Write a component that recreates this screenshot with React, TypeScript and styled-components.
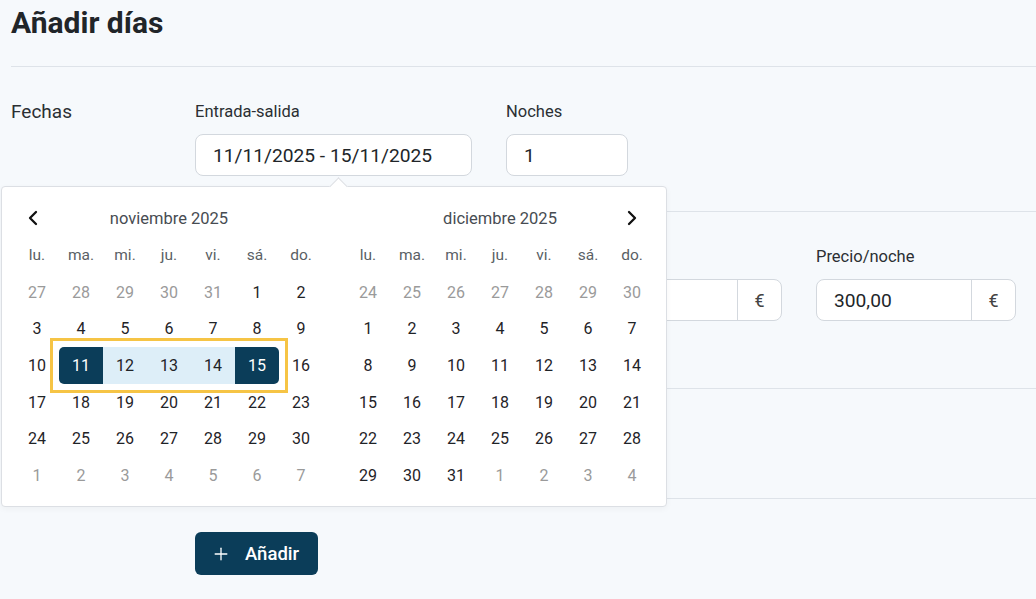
import React from 'react'
import styled, { createGlobalStyle } from 'styled-components'
import { Plus } from 'lucide-react'

const GlobalStyle = createGlobalStyle`
  * { box-sizing: border-box; }
  body {
    margin: 0;
    background: #f6f9fc;
    font-family: Roboto, "Liberation Sans", sans-serif;
    color: #212529;
  }
`

const Page = styled.div`
  position: relative;
  padding: 5px 0 0 11px;
  min-height: 599px;
`

const Header = styled.div`
  padding-bottom: 25px;
  border-bottom: 1px solid #dee3e9;
`

const Title = styled.h1`
  margin: 0;
  font-size: 30px;
  line-height: 36px;
  font-weight: 700;
  color: #212529;
`

const Section = styled.div<{ $top: number; $bottom: number }>`
  display: flex;
  padding: ${(p) => p.$top}px 0 ${(p) => p.$bottom}px;
  border-bottom: 1px solid #dee3e9;
`

const SectionLabel = styled.div`
  width: 184px;
  font-size: 19px;
  line-height: 20px;
  color: #2b2f33;
`

const Fields = styled.div`
  display: flex;
  gap: 34px;
`

const Field = styled.div<{ $width: number }>`
  width: ${(p) => p.$width}px;
  display: flex;
  flex-direction: column;
  gap: 12px;
`

const FieldLabel = styled.label`
  font-size: 16.5px;
  line-height: 20px;
  color: #2b2f33;
`

const InputBox = styled.div`
  display: flex;
  height: 42px;
  background: #fff;
  border: 1px solid #d3d8de;
  border-radius: 8px;
  overflow: hidden;
`

const InputText = styled.div`
  flex: 1;
  display: flex;
  align-items: center;
  padding-left: 17px;
  font-size: 19.2px;
  color: #212529;
`

const Addon = styled.div`
  width: 44px;
  display: flex;
  align-items: center;
  justify-content: center;
  border-left: 1px solid #d3d8de;
  font-size: 18px;
  color: #444;
`

const Actions = styled.div`
  padding: 33px 0 0 184px;
`

const Button = styled.button`
  display: flex;
  align-items: center;
  gap: 14px;
  height: 43px;
  padding: 0 19px 0 16px;
  border: none;
  border-radius: 6px;
  background: #0b3d59;
  color: #fff;
  font-family: inherit;
  font-size: 18.5px;
  font-weight: 500;
  cursor: pointer;
`

const Popup = styled.div`
  position: absolute;
  left: 1px;
  top: 186px;
  width: 666px;
  display: flex;
  gap: 23px;
  padding: 14px 12px 12px 13px;
  background: #fff;
  border: 1px solid #dcdfe4;
  border-radius: 4px;
  box-shadow: 0 2px 6px rgba(0, 0, 0, 0.04);

  &::before {
    content: '';
    position: absolute;
    left: 330px;
    top: -7px;
    width: 12px;
    height: 12px;
    background: #fff;
    border-top: 1px solid #dcdfe4;
    border-left: 1px solid #dcdfe4;
    transform: rotate(45deg);
  }
`

const Month = styled.div`
  width: 308px;
`

const MonthHeader = styled.div`
  display: grid;
  grid-template-columns: 44px 1fr 44px;
  align-items: center;
  height: 36px;
  margin-top: -1px;
  margin-bottom: 1px;
`

const MonthName = styled.div`
  text-align: center;
  font-size: 16.5px;
  color: #474c52;
`

const NavButton = styled.button<{ $side: 'left' | 'right' }>`
  display: flex;
  align-items: center;
  justify-content: center;
  padding: 0;
  margin-left: ${(p) => (p.$side === 'left' ? '-9px' : '0')};
  border: none;
  background: none;
  color: #111;
  cursor: pointer;
`

const Week = styled.div`
  display: flex;
  height: 36.7px;
`

const Cell = styled.div<{ $muted?: boolean; $head?: boolean; $state?: 'start' | 'end' | 'mid' }>`
  width: 44px;
  height: 100%;
  display: flex;
  align-items: center;
  justify-content: center;
  font-size: ${(p) => (p.$head ? 15.5 : 16)}px;
  color: ${(p) =>
    p.$state === 'start' || p.$state === 'end'
      ? '#fff'
      : p.$head
      ? '#5a5f65'
      : p.$muted
      ? '#9a9a9a'
      : '#1f2327'};
  background: ${(p) =>
    p.$state === 'start' || p.$state === 'end'
      ? '#0b3d59'
      : p.$state === 'mid'
      ? '#ddeef8'
      : 'transparent'};
  border-radius: ${(p) =>
    p.$state === 'start' ? '5px 0 0 5px' : p.$state === 'end' ? '0 5px 5px 0' : '0'};
`

const Range = styled.div`
  display: flex;
  outline: 3px solid #f6c445;
  outline-offset: 6px;
`

const Chevron = ({ dir }: { dir: 'left' | 'right' }) => (
  <svg width="12" height="16" viewBox="0 0 12 16" fill="none" stroke="currentColor" strokeWidth="2.3" strokeLinecap="round" strokeLinejoin="round">
    {dir === 'left' ? <path d="M9 2 L3 8 L9 14" /> : <path d="M3 2 L9 8 L3 14" />}
  </svg>
)

const weekdays = ['lu.', 'ma.', 'mi.', 'ju.', 'vi.', 'sá.', 'do.']

type Day = { d: number; muted: boolean; state?: 'start' | 'end' | 'mid' }

const buildMonth = (prevLast: number, prevStart: number, daysIn: number, selStart?: number, selEnd?: number) => {
  const days: Day[] = []
  for (let d = prevStart; d <= prevLast; d++) days.push({ d, muted: true })
  for (let d = 1; d <= daysIn; d++) {
    let state: Day['state']
    if (selStart && selEnd && d >= selStart && d <= selEnd) {
      state = d === selStart ? 'start' : d === selEnd ? 'end' : 'mid'
    }
    days.push({ d, muted: false, state })
  }
  let n = 1
  while (days.length < 42) days.push({ d: n++, muted: true })
  const weeks: Day[][] = []
  for (let i = 0; i < 42; i += 7) weeks.push(days.slice(i, i + 7))
  return weeks
}

const months = [
  { name: 'noviembre 2025', weeks: buildMonth(31, 27, 30, 11, 15), nav: 'prev' },
  { name: 'diciembre 2025', weeks: buildMonth(30, 24, 31), nav: 'next' },
]

const WeekRow = ({ week }: { week: Day[] }) => {
  const parts: React.ReactNode[] = []
  let group: Day[] = []
  const flush = (key: string) => {
    if (group.length) {
      parts.push(
        <Range key={key}>
          {group.map((g, i) => (
            <Cell key={i} $state={g.state}>
              {g.d}
            </Cell>
          ))}
        </Range>
      )
      group = []
    }
  }
  week.forEach((day, i) => {
    if (day.state) {
      group.push(day)
    } else {
      flush('r' + i)
      parts.push(
        <Cell key={i} $muted={day.muted}>
          {day.d}
        </Cell>
      )
    }
  })
  flush('end')
  return <Week>{parts}</Week>
}

const App = () => {
  return (
    <Page>
      <GlobalStyle />
      <Header>
        <Title>Añadir días</Title>
      </Header>

      <Section $top={35} $bottom={35}>
        <SectionLabel>Fechas</SectionLabel>
        <Fields>
          <Field $width={277}>
            <FieldLabel>Entrada-salida</FieldLabel>
            <InputBox>
              <InputText>11/11/2025 - 15/11/2025</InputText>
            </InputBox>
          </Field>
          <Field $width={122}>
            <FieldLabel>Noches</FieldLabel>
            <InputBox>
              <InputText>1</InputText>
            </InputBox>
          </Field>
        </Fields>
      </Section>

      <Section $top={35} $bottom={67}>
        <SectionLabel>Precio</SectionLabel>
        <Fields>
          <Field $width={277}>
            <FieldLabel>Tarifa</FieldLabel>
            <InputBox>
              <InputText>Estándar</InputText>
            </InputBox>
          </Field>
          <Field $width={276}>
            <FieldLabel>Precio total</FieldLabel>
            <InputBox>
              <InputText>300,00</InputText>
              <Addon>€</Addon>
            </InputBox>
          </Field>
          <Field $width={200}>
            <FieldLabel>Precio/noche</FieldLabel>
            <InputBox>
              <InputText>300,00</InputText>
              <Addon>€</Addon>
            </InputBox>
          </Field>
        </Fields>
      </Section>

      <Section $top={35} $bottom={54}>
        <SectionLabel>Notas</SectionLabel>
      </Section>

      <Actions>
        <Button>
          <Plus size={20} strokeWidth={1.6} />
          Añadir
        </Button>
      </Actions>

      <Popup>
        {months.map((m) => (
          <Month key={m.name}>
            <MonthHeader>
              <NavButton $side="left">{m.nav === 'prev' && <Chevron dir="left" />}</NavButton>
              <MonthName>{m.name}</MonthName>
              <NavButton $side="right">{m.nav === 'next' && <Chevron dir="right" />}</NavButton>
            </MonthHeader>
            <Week>
              {weekdays.map((w) => (
                <Cell key={w} $head>
                  {w}
                </Cell>
              ))}
            </Week>
            {m.weeks.map((w, i) => (
              <WeekRow key={i} week={w} />
            ))}
          </Month>
        ))}
      </Popup>
    </Page>
  )
}

export default App
